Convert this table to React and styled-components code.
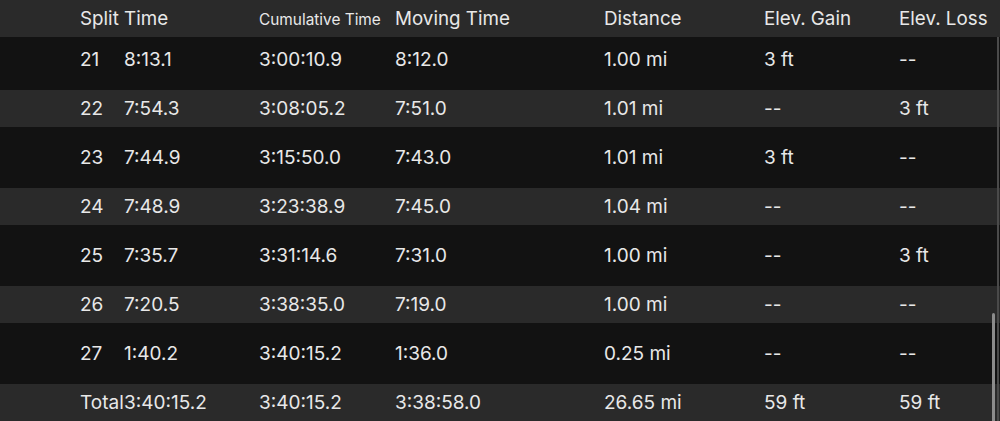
import React, { useLayoutEffect, useRef } from 'react'
import styled, { createGlobalStyle } from 'styled-components'

const COLORS = {
  light: '#2a2a2a',
  dark: '#121212',
  text: '#e8e8e8',
  edge: '#4a4a4a',
  thumb: '#8c8c8c',
}

const SPLITS = [
  ['21', '8:13.1', '3:00:10.9', '8:12.0', '1.00 mi', '3 ft', '--'],
  ['22', '7:54.3', '3:08:05.2', '7:51.0', '1.01 mi', '--', '3 ft'],
  ['23', '7:44.9', '3:15:50.0', '7:43.0', '1.01 mi', '3 ft', '--'],
  ['24', '7:48.9', '3:23:38.9', '7:45.0', '1.04 mi', '--', '--'],
  ['25', '7:35.7', '3:31:14.6', '7:31.0', '1.00 mi', '--', '3 ft'],
  ['26', '7:20.5', '3:38:35.0', '7:19.0', '1.00 mi', '--', '--'],
  ['27', '1:40.2', '3:40:15.2', '1:36.0', '0.25 mi', '--', '--'],
]

const TOTAL = ['Total', '3:40:15.2', '3:40:15.2', '3:38:58.0', '26.65 mi', '59 ft', '59 ft']

const GlobalStyle = createGlobalStyle`
  html, body {
    margin: 0;
    background: ${COLORS.dark};
  }
  body {
    font-family: Inter, "Liberation Sans", sans-serif;
    color: ${COLORS.text};
  }
`

const App = () => {
  const scroller = useRef(null)

  // table is scrolled all the way down, like the screenshot
  useLayoutEffect(() => {
    if (scroller.current) scroller.current.scrollTop = scroller.current.scrollHeight
  }, [])

  return (
    <>
      <GlobalStyle />
      <Frame>
        <Scroller ref={scroller}>
          <HeaderRow>
            <HeadCell span={2}>Split Time</HeadCell>
            <HeadCell small>Cumulative Time</HeadCell>
            <HeadCell>Moving Time</HeadCell>
            <HeadCell>Distance</HeadCell>
            <HeadCell>Elev. Gain</HeadCell>
            <HeadCell>Elev. Loss</HeadCell>
          </HeaderRow>
          {SPLITS.map((row, index) => (
            <Row key={row[0]} tall={index % 2 === 0}>
              {row.map((value, i) => <Cell key={i}>{value}</Cell>)}
            </Row>
          ))}
          <Row>
            {TOTAL.map((value, i) => <Cell key={i}>{value}</Cell>)}
          </Row>
        </Scroller>
        <Thumb />
        <Edge />
      </Frame>
    </>
  )
}

const Frame = styled.div`
  position: relative;
  height: 421px;
  width: 1000px;
  overflow: hidden;
`

const Scroller = styled.div`
  height: 100%;
  overflow-y: scroll;
  scrollbar-width: none;
  &::-webkit-scrollbar {
    display: none;
  }
`

const COLUMNS = '44px 135px 136px 209px 160px 135px 1fr'

const HeaderRow = styled.div`
  position: sticky;
  top: 0;
  z-index: 1;
  display: grid;
  grid-template-columns: ${COLUMNS};
  align-items: center;
  height: 37px;
  padding-left: 80px;
  background: ${COLORS.light};
`

const HeadCell = styled.div`
  grid-column: span ${({ span }) => span || 1};
  font-size: ${({ small }) => (small ? '15.4px' : '18.8px')};
  white-space: nowrap;
  padding-top: ${({ small }) => (small ? '1px' : '0')};
`

const Row = styled.div`
  display: grid;
  grid-template-columns: ${COLUMNS};
  align-items: center;
  height: ${({ tall }) => (tall ? '61px' : '37px')};
  padding-left: 80px;
  background: ${({ tall }) => (tall ? COLORS.dark : COLORS.light)};
`

const Cell = styled.div`
  font-size: 19px;
  white-space: nowrap;
`

const Thumb = styled.div`
  position: absolute;
  right: 5px;
  top: 313px;
  bottom: -4px;
  width: 3px;
  border-radius: 2px;
  background: ${COLORS.thumb};
`

const Edge = styled.div`
  position: absolute;
  top: 0;
  right: 1px;
  bottom: 0;
  width: 2px;
  background: ${COLORS.edge};
`

export default App
